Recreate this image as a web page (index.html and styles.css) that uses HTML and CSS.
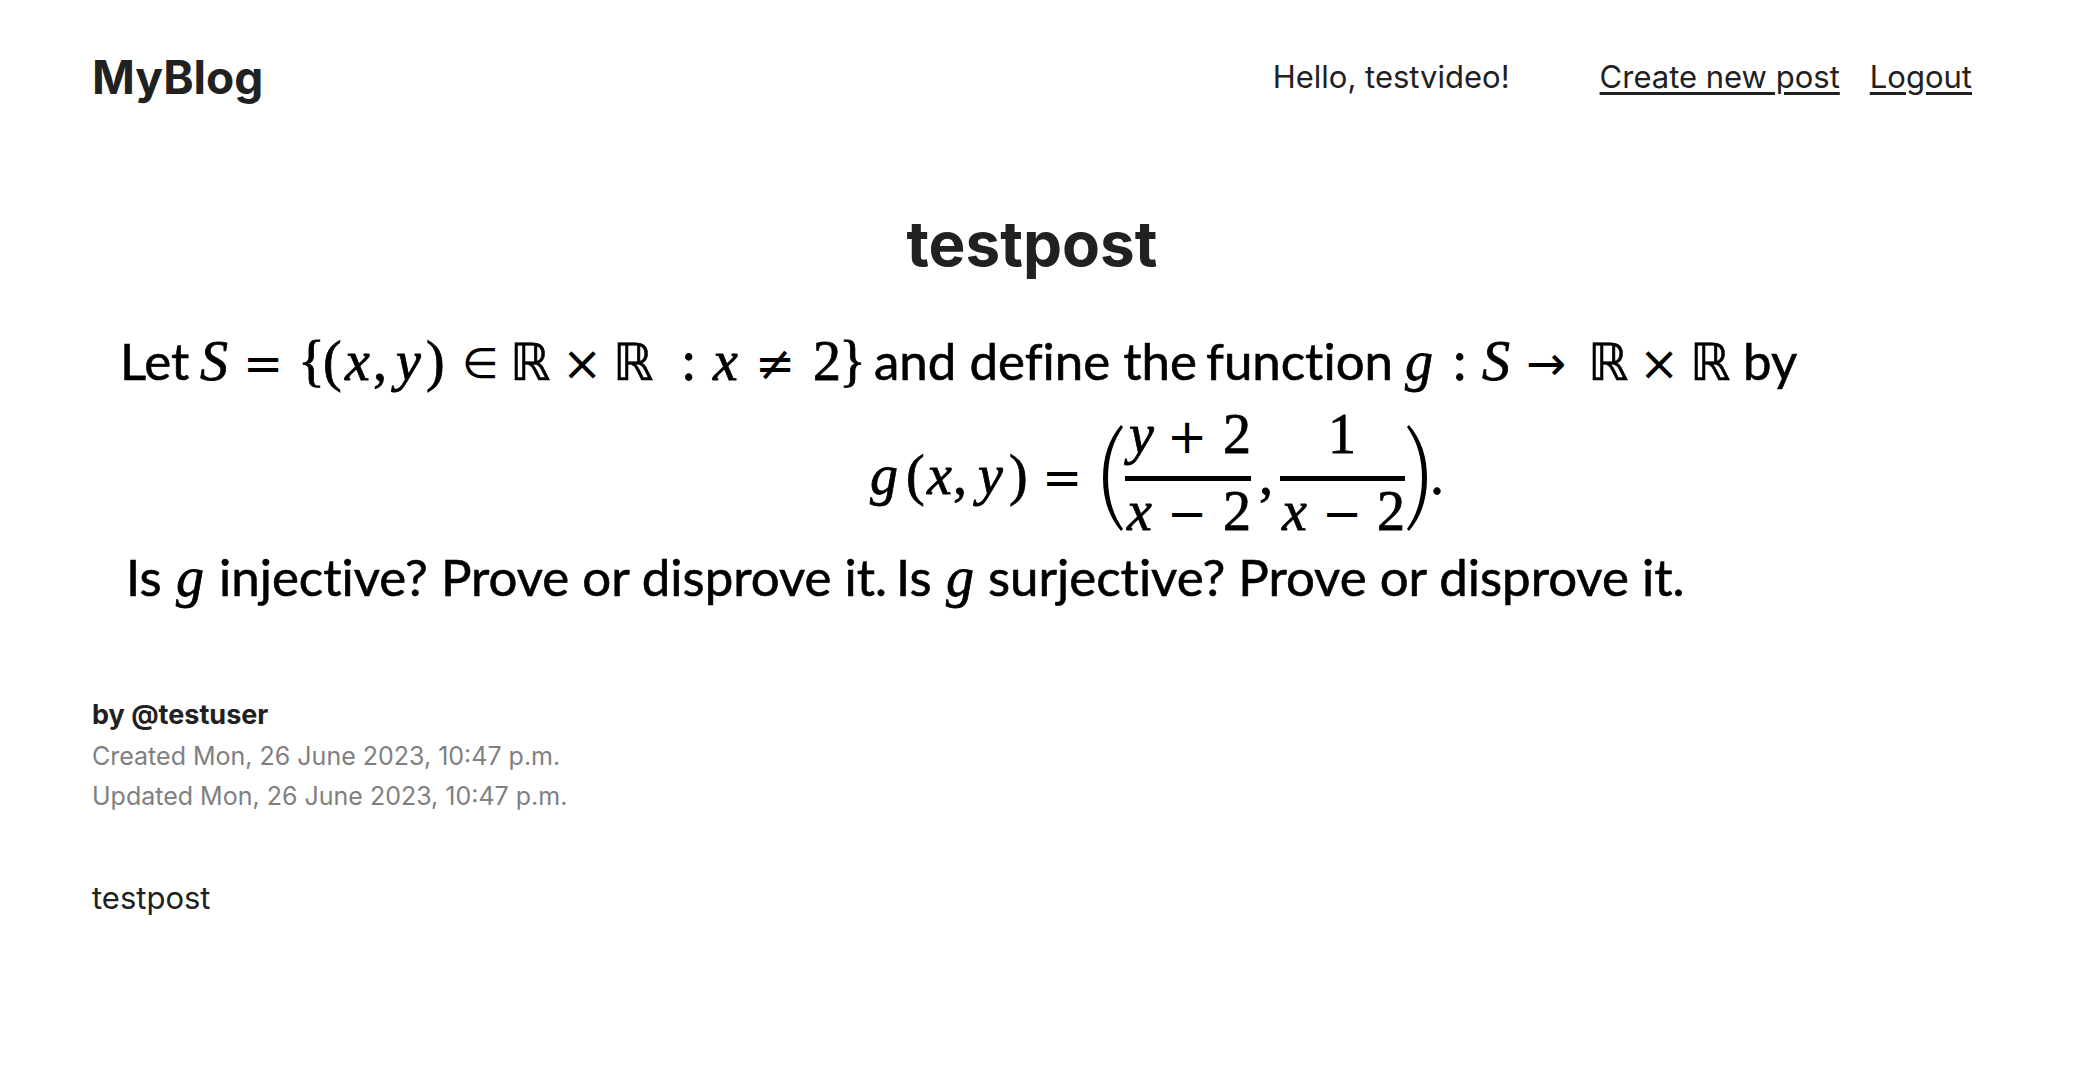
FILE: index.html
```html
<!DOCTYPE html>
<html lang="en">
<head>
<meta charset="utf-8">
<title>MyBlog</title>
<link rel="stylesheet" href="styles.css">
</head>
<body>
<header class="site-header">
  <a class="brand" href="#">MyBlog</a>
  <nav class="site-nav">
    <span class="greeting">Hello, testvideo!</span>
    <a href="#">Create new post</a>
    <a href="#">Logout</a>
  </nav>
</header>
<main class="post">
  <h1 class="post-title">testpost</h1>
  <svg class="post-figure" viewBox="0 0 1880 320">
    <g class="prose">
      <text x="28" y="59">Let</text>
      <text x="782" y="59">and define the</text>
      <text x="1114" y="59">function</text>
      <text x="1651" y="59">by</text>
      <text x="34" y="275">Is</text>
      <text x="127" y="275">injective? Prove or disprove it.</text>
      <text x="804" y="275">Is</text>
      <text x="896" y="275">surjective? Prove or disprove it.</text>
    </g>
    <g class="math">
      <text x="206 231" y="59">{(</text>
      <text x="281" y="59">,</text>
      <text x="334" y="59">)</text>
      <text x="589" y="59">:</text>
      <text x="721 747" y="59">2}</text>
      <text x="1360" y="59">:</text>
      <text x="814" y="173">(</text>
      <text x="861" y="173">,</text>
      <text x="917" y="173">)</text>
      <text x="1131" y="132">2</text>
      <text x="1131" y="209">2</text>
      <text x="1167" y="173">,</text>
      <text x="1236" y="132">1</text>
      <text x="1285" y="209">2</text>
      <text x="1338" y="173">.</text>
    </g>
    <g class="math var">
      <text x="108" y="59">S</text>
      <text x="253" y="59">x</text>
      <text x="304" y="59">y</text>
      <text x="621" y="59">x</text>
      <text x="1313" y="59">g</text>
      <text x="1390" y="59">S</text>
      <text x="778" y="173">g</text>
      <text x="835" y="173">x</text>
      <text x="886" y="173">y</text>
      <text x="1037" y="132">y</text>
      <text x="1035" y="209">x</text>
      <text x="1190" y="209">x</text>
      <text x="84" y="275">g</text>
      <text x="854" y="275">g</text>
    </g>
    <g class="operator">
      <text x="151" y="59">=</text>
      <text x="470" y="59">×</text>
      <text x="663" y="59">≠</text>
      <text x="1434" y="59">→</text>
      <text x="1547" y="59">×</text>
      <text x="950" y="173">=</text>
      <text x="1075" y="132">+</text>
      <text x="1075" y="209">−</text>
      <text x="1230" y="209">−</text>
    </g>
    <text class="member" x="370" y="57">∈</text>
    <g class="set">
      <text x="418" y="59">ℝ</text>
      <text x="521" y="59">ℝ</text>
      <text x="1496" y="59">ℝ</text>
      <text x="1598" y="59">ℝ</text>
    </g>
    <!-- Fraction bars and the tall brackets round them -->
    <path d="M1033 155h126v5h-126zM1188 155h125v5h-125z"/>
    <path d="M1029 104Q1011 125 1011 157T1029 210L1031 208Q1016 187 1016 157T1031 106z"/>
    <path d="M1317 104Q1335 125 1335 157T1317 210L1315 208Q1330 187 1330 157T1315 106z"/>
  </svg>
  <section class="byline">
    <strong class="author">by @testuser</strong>
    <span>Created Mon, 26 June 2023, 10:47 p.m.</span>
    <span>Updated Mon, 26 June 2023, 10:47 p.m.</span>
  </section>
  <p class="post-body">testpost</p>
</main>
</body>
</html>
```
FILE: styles.css
```css
* { box-sizing: border-box; }
body { margin: 0; padding: 47px 102px 48px 92px; background: #fff; color: #212121; font-family: Inter, sans-serif; font-size: 31px; line-height: 60px; }
a { color: inherit; }
.site-header { display: flex; justify-content: space-between; align-items: center; }
.brand { font-size: 46px; font-weight: 700; text-decoration: none; }
.site-nav { display: flex; gap: 30px; text-underline-offset: 4px; }
.greeting { margin-right: 60px; }
.post-title { margin: 91px 0 31px; font-size: 62px; line-height: 92px; font-weight: 700; text-align: center; }
.post-figure { display: block; width: 100%; height: auto; fill: #000; stroke: #000; stroke-width: 0; }
.prose { font: 51px Lato, sans-serif; font-variant-ligatures: none; stroke-width: 0.6px; }
.math { font: 56px "Liberation Serif", serif; stroke-width: 0.8px; }
.var { font-style: italic; }
.operator { font: 48px "DejaVu Sans", sans-serif; }
.member { font: 42px "DejaVu Sans", sans-serif; }
.set { font: 51px "DejaVu Sans", sans-serif; stroke-width: 0.6px; }
.byline { display: flex; flex-direction: column; margin-top: 54px; font-size: 25px; line-height: 40px; color: #808080; }
.author { margin-bottom: 1px; color: #212121; font-size: 27px; }
.post-body { margin: 52px 0 0; }
```
